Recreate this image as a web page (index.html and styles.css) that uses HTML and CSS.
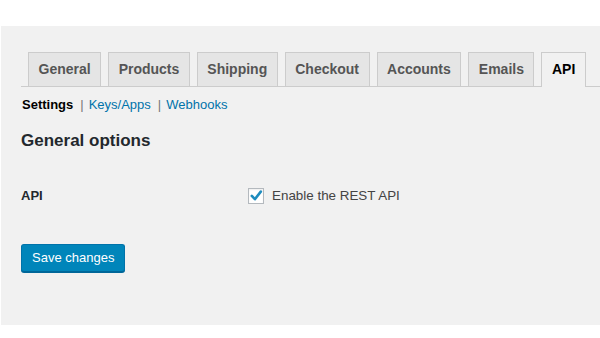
FILE: index.html
```html
<!DOCTYPE html>
<html lang="en">
<head>
    <meta charset="UTF-8">
    <meta name="viewport" content="width=device-width, initial-scale=1.0">
    <title>Settings - API</title>
    <link rel="stylesheet" href="styles.css">
</head>
<body>
    <div class="panel">
        <nav class="nav-tab-wrapper">
            <a class="nav-tab" href="#">General</a>
            <a class="nav-tab" href="#">Products</a>
            <a class="nav-tab" href="#">Shipping</a>
            <a class="nav-tab" href="#">Checkout</a>
            <a class="nav-tab" href="#">Accounts</a>
            <a class="nav-tab" href="#">Emails</a>
            <a class="nav-tab nav-tab-active" href="#">API</a>
        </nav>

        <ul class="subsubsub">
            <li><a class="current" href="#">Settings</a><span class="sep">|</span></li>
            <li><a href="#">Keys/Apps</a><span class="sep">|</span></li>
            <li><a href="#">Webhooks</a></li>
        </ul>

        <h2>General options</h2>

        <div class="form-row">
            <div class="form-label">API</div>
            <label class="check-field">
                <span class="check-box">
                    <svg width="16" height="16" viewBox="0 0 16 16">
                        <path d="M3.8 7.9 L6.9 11.2 L12.8 3.6" fill="none" stroke="#1e8cbe" stroke-width="2.6" stroke-linecap="round" stroke-linejoin="round"/>
                    </svg>
                </span>
                Enable the REST API
            </label>
        </div>

        <button type="submit" class="button-primary">Save changes</button>
    </div>
</body>
</html>
```

FILE: styles.css
```css
body {
    margin: 0;
    background: #fff;
    font-family: "Liberation Sans", Arial, sans-serif;
    font-size: 13px;
    color: #444;
}

.panel {
    margin: 26px 0 0 1px;
    height: 299px;
    box-sizing: border-box;
    padding: 26px 0 0 20px;
    background: #f1f1f1;
}

.nav-tab-wrapper {
    display: flex;
    align-items: flex-end;
    border-bottom: 1px solid #ccc;
}

.nav-tab {
    box-sizing: border-box;
    height: 34px;
    margin-left: 7px;
    padding: 0 9.5px;
    border: 1px solid #ccc;
    border-bottom: none;
    background: #e5e5e5;
    color: #555;
    font-size: 14px;
    font-weight: bold;
    line-height: 32px;
    text-decoration: none;
}

.nav-tab-active {
    height: 35px;
    margin-bottom: -1px;
    background: #f1f1f1;
    color: #000;
}

.subsubsub {
    display: flex;
    margin: 5px 0 0 1px;
    padding: 0;
    list-style: none;
    line-height: 26px;
    color: #777;
}

.subsubsub a {
    color: #0073aa;
    text-decoration: none;
}

.subsubsub a.current {
    color: #000;
    font-weight: bold;
}

.sep {
    margin: 0 5px 0 7px;
}

h2 {
    margin: 11px 0 0;
    font-size: 17px;
    line-height: 24px;
    color: #23282d;
}

.form-row {
    display: grid;
    grid-template-columns: 227px 1fr;
    margin-top: 33px;
    line-height: 20px;
}

.form-label {
    font-weight: bold;
    color: #23282d;
}

.check-field {
    display: flex;
    align-items: center;
    gap: 8px;
    font-size: 13.4px;
}

.check-box {
    box-sizing: border-box;
    width: 16px;
    height: 16px;
    border: 1px solid #b4b9be;
    background: #fff;
    box-shadow: inset 0 1px 2px rgba(0, 0, 0, 0.07);
    display: flex;
}

.check-box svg {
    margin: -1px;
}

.button-primary {
    display: block;
    margin-top: 38px;
    height: 28px;
    padding: 0 10px;
    border: 1px solid #0073aa;
    border-bottom-color: #006799;
    border-radius: 3px;
    background: #0085ba;
    box-shadow: 0 1px 0 #006799;
    color: #fff;
    font-family: inherit;
    font-size: 13px;
    line-height: 26px;
}
```
